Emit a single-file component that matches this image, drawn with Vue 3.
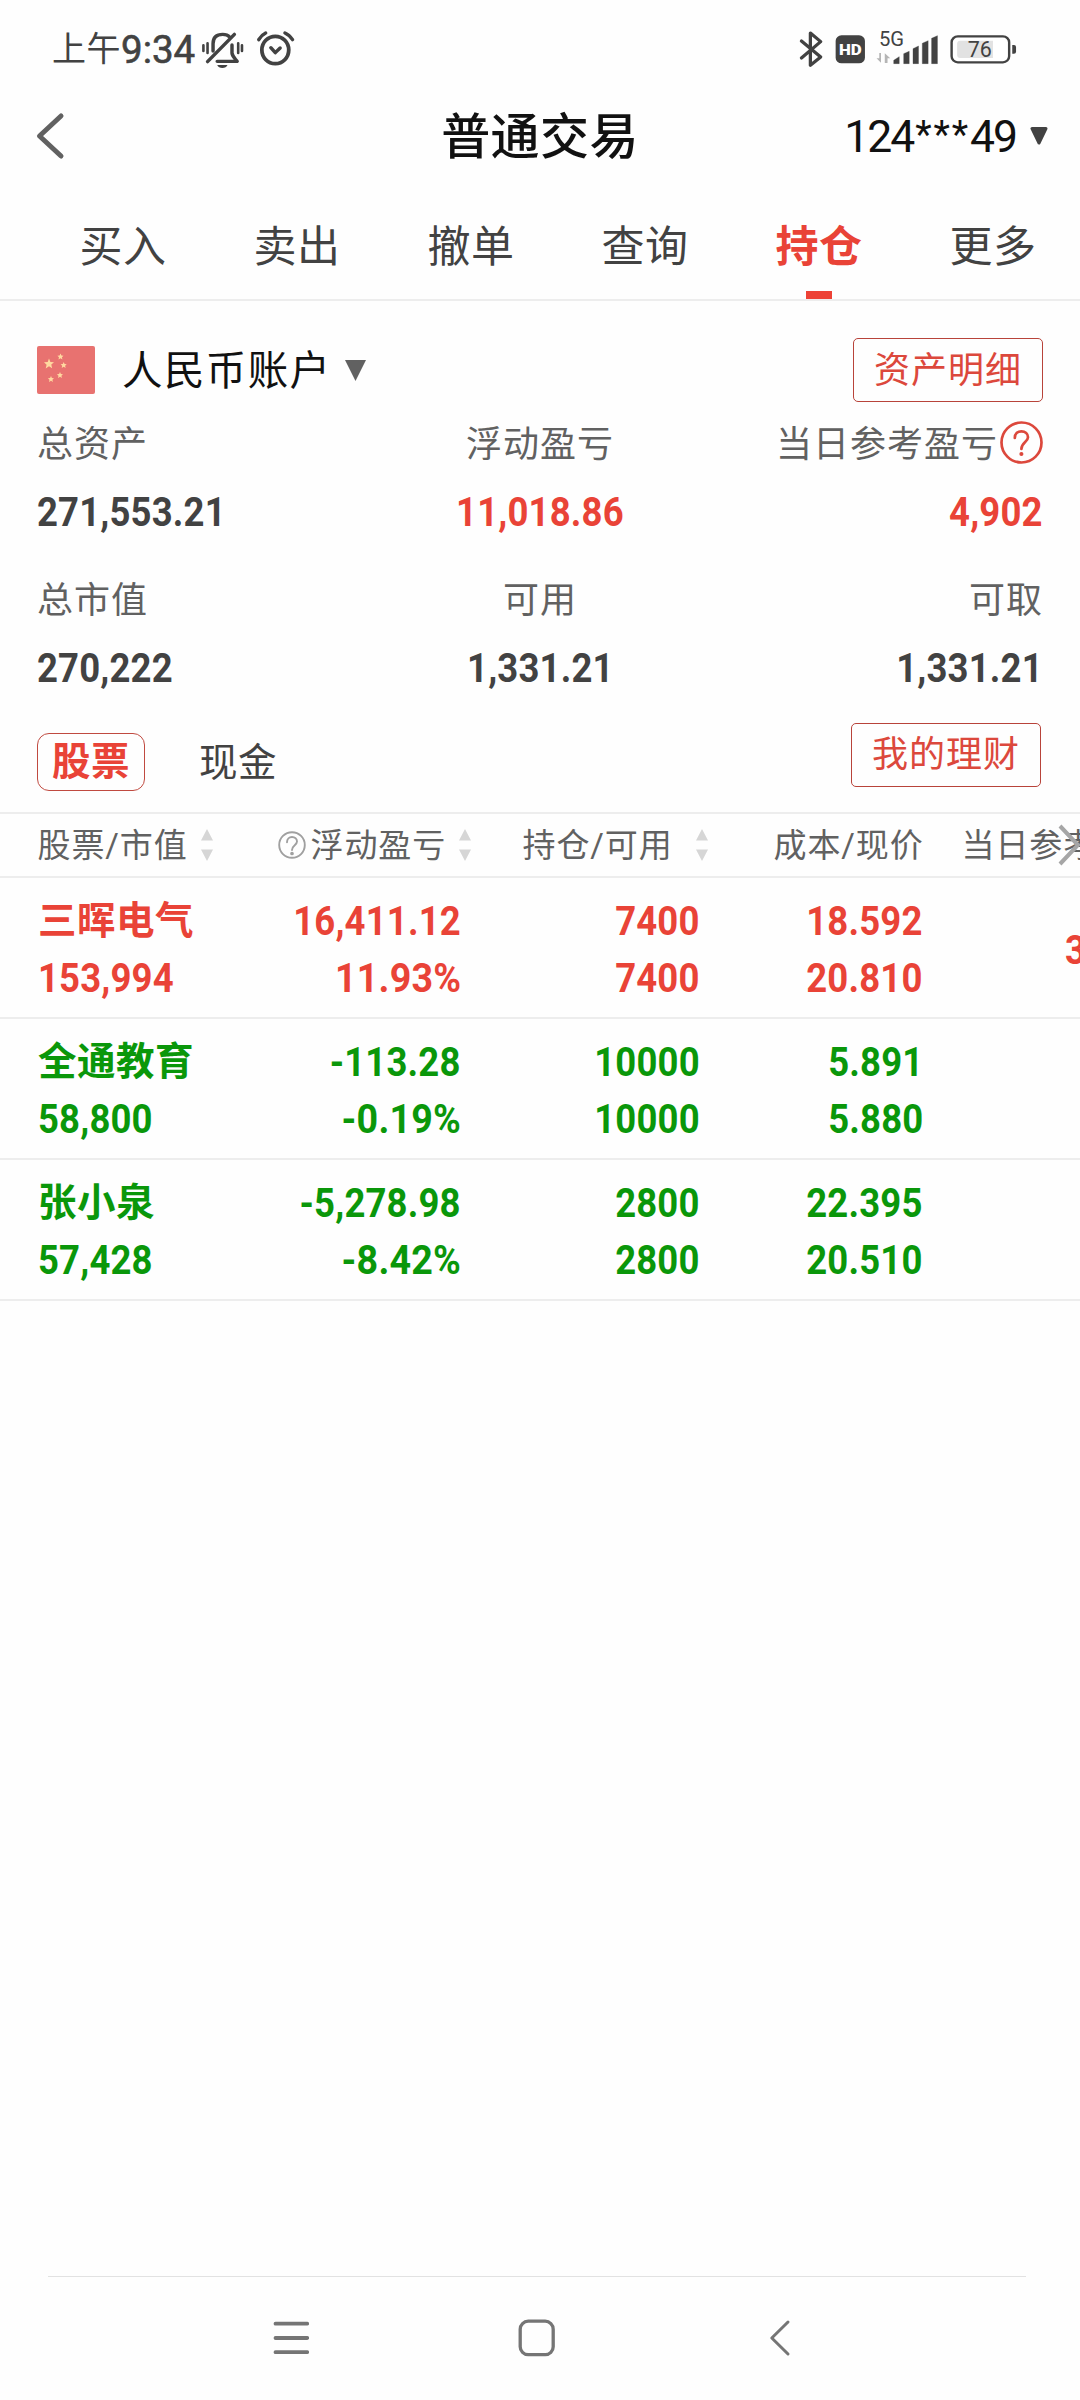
<script setup>
const tabs = ['买入', '卖出', '撤单', '查询', '持仓', '更多']
const activeTab = '持仓'

const summary = [
  [
    { label: '总资产', value: '271,553.21' },
    { label: '浮动盈亏', value: '11,018.86', up: true },
    { label: '当日参考盈亏', value: '4,902', up: true, help: true },
  ],
  [
    { label: '总市值', value: '270,222' },
    { label: '可用', value: '1,331.21' },
    { label: '可取', value: '1,331.21' },
  ],
]

const columns = [
  { label: '股票/市值', sort: true },
  { label: '浮动盈亏', sort: true, help: true },
  { label: '持仓/可用', sort: true, wide: true },
  { label: '成本/现价' },
  { label: '当日参考盈亏' },
]

const rows = [
  { name: '三晖电气', up: true, market: '153,994', cells: [['16,411.12', '11.93%'], ['7400', '7400'], ['18.592', '20.810']], day: '3' },
  { name: '全通教育', up: false, market: '58,800', cells: [['-113.28', '-0.19%'], ['10000', '10000'], ['5.891', '5.880']], day: '' },
  { name: '张小泉', up: false, market: '57,428', cells: [['-5,278.98', '-8.42%'], ['2800', '2800'], ['22.395', '20.510']], day: '' },
]
</script>

<template>
  <div class="screen">
    <div class="status">
      <div class="clock"><span class="ampm">上午</span><span class="time">9:34</span></div>
      <svg class="bell" viewBox="585 92 126 114" preserveAspectRatio="none" fill="none" stroke="#424242" stroke-linecap="round" stroke-linejoin="round">
        <path d="M592 135V152M604 129V158M693 129V158M704 135V152" stroke-width="7.500" />
        <path d="M620 152V130C620 110 632 102 648 102C657 102 664 105 668 110" stroke-width="10" />
        <path d="M604 184L682 102" stroke-width="10" />
        <path d="M675 134V158C676 168 683 174 690 183H632" stroke-width="10" />
        <path d="M632 194H662C660 200 654 203 647 203C640 203 634 200 632 194Z" fill="#424242" stroke="none" />
      </svg>
      <svg class="alarm" viewBox="745 92 114 110" preserveAspectRatio="none" fill="none" stroke="#424242" stroke-linecap="round" stroke-linejoin="round">
        <ellipse cx="801" cy="152" rx="39" ry="41" stroke-width="11" />
        <path d="M753 121C758 112 765 105 773 101M829 101C838 105 845 112 851 121" stroke-width="10" />
        <path d="M788 145L801 160L815 146" stroke-width="10" />
      </svg>
      <div class="indicators">
        <svg width="27.5" height="38.3" viewBox="750 90 80 115" preserveAspectRatio="none" fill="none" stroke="#424242" stroke-width="9.500" stroke-linecap="round" stroke-linejoin="round">
          <path d="M760 123L816 171L786 196V99L816 125L760 174" />
        </svg>
        <svg width="44.8" height="38.3" viewBox="830 90 130 115" preserveAspectRatio="none">
          <rect x="858" y="106" width="85" height="84" rx="17" fill="#424242" />
          <text x="900.5" y="165" text-anchor="middle" font-size="45" font-weight="900" textLength="66" lengthAdjust="spacingAndGlyphs" fill="#fff">HD</text>
        </svg>
        <svg class="signal" width="72.3" height="48.3" viewBox="960 60 210 145" preserveAspectRatio="none">
          <text x="983" y="138" font-size="59" textLength="73" lengthAdjust="spacingAndGlyphs" fill="#424242">5G</text>
          <path d="M989 159V188L976 175H984V159ZM1000 189V160L1016 175H1008V189Z" fill="#b5b5b5" />
          <path d="M1026 191V181L1042 170V191ZM1055 191V161L1071 154V191ZM1082 191V146L1098 138V191ZM1109 191V130L1126 122V191ZM1136 191V115L1153 107V191Z" fill="#424242" stroke="#424242" stroke-width="1" stroke-linejoin="round" />
        </svg>
        <svg width="75.8" height="38.3" viewBox="1170 90 220 115" preserveAspectRatio="none">
          <rect x="1195" y="109" width="167" height="78" rx="18" fill="#fff" stroke="#424242" stroke-width="7" />
          <path d="M1220 122H1315V174H1220Q1211 174 1211 165V131Q1211 122 1220 122Z" fill="#e2e2e2" />
          <path d="M1371 135H1376Q1382 135 1382 141V155Q1382 161 1376 161H1371Z" fill="#424242" />
          <text x="1277" y="171" text-anchor="middle" font-size="69" textLength="70" lengthAdjust="spacingAndGlyphs" fill="#424242">76</text>
        </svg>
      </div>
    </div>

    <header class="titlebar">
      <svg class="back" width="30" height="48" viewBox="0 0 30 48" fill="none" stroke="#616161" stroke-width="5" stroke-linecap="round" stroke-linejoin="round"><path d="M26 4L4.500 24L26 44" /></svg>
      <h1>普通交易</h1>
      <div class="account"><span class="acct-no">124<span class="mask">***</span>49</span>
        <svg width="18" height="18" viewBox="0 0 18 18"><path d="M2 1.500H16L9 16Z" fill="#424242" stroke="#424242" stroke-width="3" stroke-linejoin="round" /></svg>
      </div>
    </header>

    <nav class="tabs">
      <div v-for="t in tabs" :key="t" class="tab" :class="{ active: t === activeTab }">{{ t }}</div>
    </nav>

    <section class="account-row">
      <svg class="flag" width="58" height="48" viewBox="0 0 58 48">
        <rect width="58" height="48" rx="2" fill="#e87270" />
        <g fill="#ffd9a0">
          <path d="M12 12.500L13.400 15.900L17 16.200L14.300 18.600L15.100 22.200L12 20.300L8.700 22.500L9.600 18.700L7 16.200L10.700 15.900Z" />
          <path d="M23.500 7.500l.9 2 2.100.2-1.600 1.500.5 2.200-1.900-1.200-2 1.200.5-2.200-1.600-1.500 2.200-.2Z" />
          <path d="M26.700 16l.9 2 2.100.2-1.600 1.500.5 2.200-1.900-1.200-2 1.200.5-2.200-1.600-1.500 2.200-.2Z" />
          <path d="M23 26l.9 2 2.100.2-1.600 1.500.5 2.200-1.900-1.200-2 1.200.5-2.200-1.600-1.500 2.200-.2Z" />
          <path d="M14 30l.9 2 2.100.2-1.600 1.500.5 2.200-1.900-1.200-2 1.200.5-2.200-1.600-1.500 2.200-.2Z" />
        </g>
      </svg>
      <span class="currency">人民币账户</span>
      <svg class="caret" width="21" height="21" viewBox="0 0 21 21"><path d="M0 0H21L10.500 21Z" fill="#616161" /></svg>
      <button class="outline">资产明细</button>
    </section>

    <section class="summary">
      <div v-for="(group, g) in summary" :key="g" class="summary-row">
        <div v-for="item in group" :key="item.label" class="item">
          <div class="label"><span>{{ item.label }}</span>
            <svg v-if="item.help" width="43" height="43" viewBox="0 0 43 43" fill="none" stroke="#dc483c" stroke-width="2.700">
              <circle cx="21.500" cy="21.500" r="20" />
              <path d="M14.800 17C14.800 12.800 17.600 10.300 21.400 10.300C25.200 10.300 28 12.800 28 16.300C28 20.800 21.400 21.500 21.400 28" stroke-linecap="round" />
              <circle cx="21.400" cy="33" r="1.300" fill="#dc483c" stroke-width="1.500" />
            </svg>
          </div>
          <div class="value" :class="{ up: item.up }"><span class="num">{{ item.value }}</span></div>
        </div>
      </div>
    </section>

    <section class="kinds">
      <span class="kind on">股票</span>
      <span class="kind">现金</span>
      <button class="outline">我的理财</button>
    </section>

    <div class="thead">
      <div v-for="c in columns" :key="c.label" class="th" :class="{ wide: c.wide }">
        <svg v-if="c.help" class="help" width="28" height="28" viewBox="0 0 28 28" fill="none" stroke="#a0a0a0" stroke-width="1.900">
          <circle cx="14" cy="14" r="12.800" />
          <path d="M9 11.200C9 8 11.300 6 14 6C16.800 6 19 7.900 19 10.600C19 14.200 14 14.500 14 19" stroke-linecap="round" />
          <circle cx="14" cy="22.500" r=".9" fill="#a0a0a0" />
        </svg>
        <span>{{ c.label }}</span>
        <svg v-if="c.sort" class="sort" width="12" height="32" viewBox="0 0 12 32" fill="#d6d6d6"><path d="M6 0L12 11.500H0ZM0 20.500H12L6 32Z" /></svg>
      </div>
      <svg class="more" width="26" height="44" viewBox="0 0 26 44" fill="none" stroke="#a6a6a6" stroke-width="4"><path d="M4 3L22 22L4 41" /></svg>
    </div>

    <div v-for="r in rows" :key="r.name" class="row" :class="r.up ? 'up' : 'down'">
      <div class="stock">
        <div class="name">{{ r.name }}</div>
        <div class="line"><span class="num">{{ r.market }}</span></div>
      </div>
      <div v-for="(cell, i) in r.cells" :key="i" class="cell">
        <div v-for="(v, j) in cell" :key="j" class="line"><span class="num" :class="{ percent: v.endsWith('%') }">{{ v }}</span></div>
      </div>
      <div class="day"><span class="num">{{ r.day }}</span></div>
    </div>

    <footer class="navbar">
      <svg width="36" height="38" viewBox="0 0 36 38" stroke="#757575" stroke-width="3.800" stroke-linecap="round"><path d="M2.500 4.700H34.200M2.500 19H34.200M2.500 33.200H34.200" /></svg>
      <svg class="home" width="38" height="38" viewBox="0 0 38 38" fill="none" stroke="#757575" stroke-width="3.300"><rect x="2.200" y="2.200" width="33" height="33.500" rx="8" /></svg>
      <svg width="22" height="38" viewBox="0 0 22 38" fill="none" stroke="#757575" stroke-width="3" stroke-linecap="round" stroke-linejoin="round"><path d="M19 3L2.800 19L19 35" /></svg>
    </footer>
  </div>
</template>

<style>
body { background: #fefefe; }
</style>

<style scoped>
.screen {
  width: 1080px;
  height: 2400px;
  overflow: hidden;
  display: flex;
  flex-direction: column;
  background: #fefefe;
  color: #424242;
  font-family: Roboto, "Noto Sans CJK SC", sans-serif;
}
svg { display: block; flex: none; }
.status { height: 97px; display: flex; align-items: center; padding-left: 52px; flex: none; }
.clock { display: flex; align-items: center; width: 149px; line-height: 40px; }
.ampm { font-size: 34px; letter-spacing: .5px; padding-top: 1px; }
.time { font-size: 38.500px; -webkit-text-stroke: .6px #424242; letter-spacing: 0; margin-top: 3px; }
.bell { width: 43.400px; height: 38px; margin-top: 2px; }
.alarm { width: 39.300px; height: 36.700px; margin-left: 12px; }
.indicators { display: flex; height: 38.300px; align-items: flex-end; margin-left: auto; margin-right: 61.300px; margin-top: 1px; }

.titlebar { height: 78px; flex: none; display: grid; grid-template-columns: 340px 400px 1fr; align-items: center; }
.back { margin-left: 35px; }
h1 { margin: 3px 0 0; font-size: 49px; line-height: 60px; font-weight: 500; color: #111; text-align: center; letter-spacing: .4px; }
.account { display: flex; align-items: center; justify-content: flex-end; padding-right: 32px; gap: 14px; }
.acct-no { font-size: 44.500px; line-height: 50px; letter-spacing: -2px; color: #111; margin-top: 2px; white-space: nowrap; }
.mask { font-size: 38px; letter-spacing: 1.900px; vertical-align: 4px; line-height: 1; margin-left: 2px; }

.tabs { height: 124px; flex: none; display: flex; padding-left: 36px; border-bottom: 2px solid #ededed; }
.tab { width: 174px; height: 124px; line-height: 144px; font-size: 43px; letter-spacing: .4px; text-align: center; display: flex; flex-direction: column; align-items: center; }
.tab.active { color: #e94337; font-weight: 700; }
.tab.active::after { content: ""; width: 26px; height: 8px; background: #ed4236; margin-top: -28px; }

.account-row { height: 102px; padding: 18px 37px 0; flex: none; display: flex; align-items: center; box-sizing: content-box; }
.currency { font-size: 40.500px; letter-spacing: 1.400px; margin-left: 27px; padding-top: 2px; color: #111; line-height: 50px; }
.caret { margin-left: 13px; }
.outline {
  width: 190px; height: 64px; margin: 0 0 0 auto; padding: 0;
  border: 1px solid #b8433a; border-radius: 5px; background: transparent;
  color: #dc483c; font-family: inherit; font-size: 36px; letter-spacing: 1px; line-height: 62px;
}
.account-row .outline { padding-top: 1px; }
.summary { padding: 0 37px; flex: none; }
.summary-row { display: grid; grid-template-columns: 1fr 1fr 1fr; height: 156px; }
.summary-row:last-child { height: 147px; }
.item { text-align: center; }
.item:first-child { text-align: left; }
.item:last-child { text-align: right; }
.item:last-child .label { justify-content: flex-end; }
.item:nth-child(2) .label { justify-content: center; }
.label { display: flex; align-items: center; height: 43px; font-size: 36px; letter-spacing: 1px; color: #616161; gap: 2px; }
.label span { padding-bottom: 4px; }
.value { height: 96px; line-height: 98px; }
.num { display: inline-block; font-size: 40px; font-weight: 700; transform: scaleX(.912); transform-origin: center; letter-spacing: .2px; }
.item:first-child .num, .stock .num { transform-origin: left center; }
.item:last-child .num, .cell .num { transform-origin: right center; }
.num.percent { transform: scaleX(.94); }
.up { color: #e94337; }
.down { color: #0a970a; }

.kinds { flex: none; height: 88px; display: flex; align-items: flex-start; padding: 0 39px 0 37px; }
.kinds .outline { margin-top: -1px; }
.kind { font-size: 38.500px; line-height: 56px; height: 56px; margin-top: 9px; letter-spacing: .5px; }
.kind.on { width: 106px; text-align: center; border: 1px solid #c04a40; border-radius: 12px; font-weight: 700; color: #e94337; margin-right: 54px; }
.kind:not(.on) { margin-top: 11px; }

.thead {
  position: relative; flex: none; height: 62px; overflow: hidden;
  display: grid; grid-template-columns: 240px 245px 251px 188px 1fr; padding-left: 37.500px;
  border-top: 2px solid #ededed; border-bottom: 2px solid #ededed;
  font-size: 33px; color: #616161; letter-spacing: .9px; white-space: nowrap;
}
.th { display: flex; align-items: center; min-width: 0; }
.th span { padding-bottom: 4px; }
.help { margin-right: 5px; }
.sort { margin-left: 13px; }
.wide .sort { margin-left: 23px; }
.more { position: absolute; right: -2px; top: 9px; }

.row {
  flex: none; height: 139px; overflow: hidden; border-bottom: 2px solid #ededed;
  display: grid; grid-template-columns: 200px 223px 239px 223px 1fr; padding-left: 38px;
}
.stock, .cell { padding-top: 14px; }
.cell { text-align: right; }
.line, .name { height: 57px; line-height: 57px; white-space: nowrap; }
.line { line-height: 60px; }
.name { font-size: 38.500px; font-weight: 700; letter-spacing: .5px; }
.day { padding-left: 141px; line-height: 146px; }

.navbar {
  flex: none; margin: auto 54px 0 48px; height: 124px; border-top: 1px solid #e2e2e2;
  display: flex; align-items: flex-start; padding: 42px 235px 0 225px; justify-content: space-between; box-sizing: border-box;
}
.home { margin-right: 4px; }
</style>
